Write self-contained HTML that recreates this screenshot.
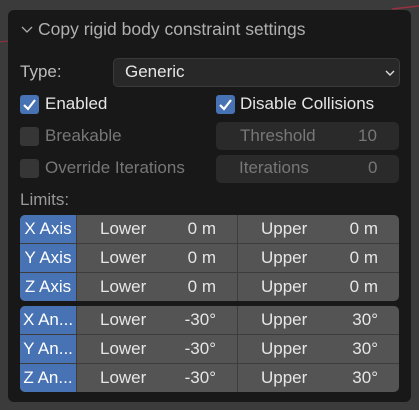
<!DOCTYPE html>
<html><head><style>
body{margin:0;width:419px;height:410px;background:#3b3b3b;position:relative;overflow:hidden;font-family:"Liberation Sans",sans-serif;font-size:17px;}
.a{position:absolute;}
.panel{left:8px;top:10px;width:403px;height:392px;background:#181818;border-radius:6px;}
.t{color:#e6e6e6;white-space:nowrap;line-height:20px;}
.d{color:#777;}
.cb{width:19px;height:19px;border-radius:3px;}
.on{background:#4772b3;}
.off{background:#363636;}
.fld{background:#2a2a2a;border-radius:5px;}
.tbl{left:20px;width:379px;height:86px;background:#545454;border-radius:5px;overflow:hidden;}
.row{position:absolute;left:0;width:379px;height:28px;}
.row .b{position:absolute;left:0;top:0;width:56px;height:28px;background:#4772b3;color:#fff;line-height:28px;text-align:center;white-space:nowrap;}
.row span{position:absolute;top:0;line-height:28px;color:#e6e6e6;white-space:nowrap;}
.row span.r{text-align:right;}
.sep{position:absolute;height:1px;left:0;width:379px;background:#3d3d3d;}
.vs{position:absolute;top:0;width:1px;height:86px;background:#3d3d3d;}
</style></head><body>
<svg class="a" style="left:0;top:0" width="419" height="410"><line x1="0" y1="42" x2="8" y2="41" stroke="#9a3040" stroke-width="1"/><line x1="392" y1="9" x2="419" y2="6" stroke="#9a3040" stroke-width="1.5"/></svg>
<div class="a panel"></div>
<svg class="a" style="left:20px;top:24px" width="14" height="12"><polyline points="2,3 7,8 12,3" fill="none" stroke="#aaa" stroke-width="1.3"/></svg>
<div class="a t" style="left:38px;top:19px;color:#b0b0b0;font-size:17.5px">Copy rigid body constraint settings</div>
<div class="a t" style="left:20px;top:62px;color:#bcbcbc">Type:</div>
<div class="a" style="left:113px;top:58px;width:285px;height:27px;background:#282828;border:1px solid #3a3a3a;border-radius:5px"></div>
<div class="a t" style="left:125px;top:62px">Generic</div>
<svg class="a" style="left:385px;top:69px" width="10" height="8"><polyline points="1,2 5,6 9,2" fill="none" stroke="#ddd" stroke-width="1.4"/></svg>
<div class="a cb on" style="left:20px;top:95px"></div>
<svg class="a" style="left:20px;top:95px" width="19" height="19"><polyline points="4,10 8,14 15,5" fill="none" stroke="#fff" stroke-width="2.2"/></svg>
<div class="a t" style="left:45px;top:94px">Enabled</div>
<div class="a cb on" style="left:216px;top:95px"></div>
<svg class="a" style="left:216px;top:95px" width="19" height="19"><polyline points="4,10 8,14 15,5" fill="none" stroke="#fff" stroke-width="2.2"/></svg>
<div class="a t" style="left:240px;top:94px">Disable Collisions</div>
<div class="a cb off" style="left:20px;top:127px"></div>
<div class="a t d" style="left:45px;top:126px">Breakable</div>
<div class="a fld" style="left:216px;top:122px;width:183px;height:28px"></div>
<div class="a t d" style="left:240px;top:126px">Threshold</div>
<div class="a t d" style="left:358px;top:126px">10</div>
<div class="a cb off" style="left:20px;top:159px"></div>
<div class="a t d" style="left:45px;top:158px">Override Iterations</div>
<div class="a fld" style="left:216px;top:155px;width:183px;height:28px"></div>
<div class="a t d" style="left:239px;top:158px">Iterations</div>
<div class="a t d" style="left:368px;top:158px">0</div>
<div class="a t" style="left:20px;top:190px;color:#999">Limits:</div>
<div class="a tbl" style="top:215px">
<div class="sep" style="top:28px"></div><div class="sep" style="top:57px"></div><div class="vs" style="left:56px"></div><div class="vs" style="left:217px"></div>
<div class="row" style="top:0"><div class="b">X Axis</div><span style="left:80px">Lower</span><span class="r" style="right:183px">0 m</span><span style="left:241px">Upper</span><span class="r" style="right:21px">0 m</span></div>
<div class="row" style="top:29px"><div class="b">Y Axis</div><span style="left:80px">Lower</span><span class="r" style="right:183px">0 m</span><span style="left:241px">Upper</span><span class="r" style="right:21px">0 m</span></div>
<div class="row" style="top:58px"><div class="b">Z Axis</div><span style="left:80px">Lower</span><span class="r" style="right:183px">0 m</span><span style="left:241px">Upper</span><span class="r" style="right:21px">0 m</span></div>
</div>
<div class="a tbl" style="top:306px">
<div class="sep" style="top:28px"></div><div class="sep" style="top:57px"></div><div class="vs" style="left:56px"></div><div class="vs" style="left:217px"></div>
<div class="row" style="top:0"><div class="b">X An...</div><span style="left:80px">Lower</span><span class="r" style="right:183px">-30°</span><span style="left:241px">Upper</span><span class="r" style="right:21px">30°</span></div>
<div class="row" style="top:29px"><div class="b">Y An...</div><span style="left:80px">Lower</span><span class="r" style="right:183px">-30°</span><span style="left:241px">Upper</span><span class="r" style="right:21px">30°</span></div>
<div class="row" style="top:58px"><div class="b">Z An...</div><span style="left:80px">Lower</span><span class="r" style="right:183px">-30°</span><span style="left:241px">Upper</span><span class="r" style="right:21px">30°</span></div>
</div>
</body></html>
